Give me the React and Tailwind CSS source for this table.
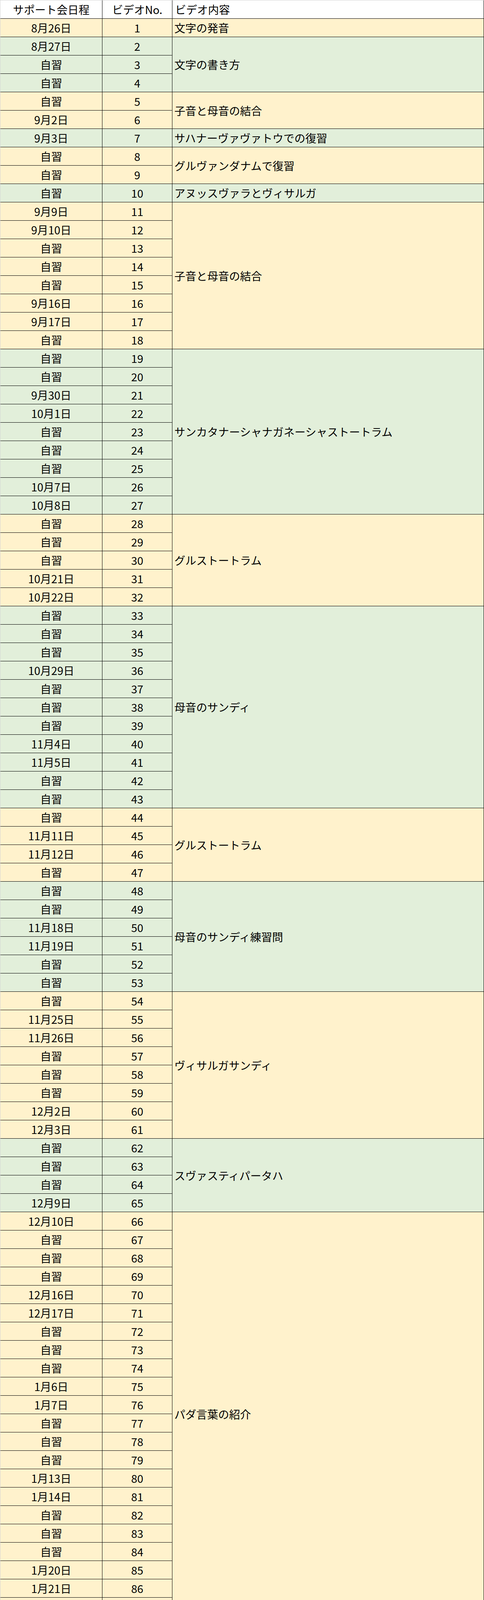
import React from 'react'

const S = '自習'

// 1〜120 のサポート会日程（100番は日付を書き換えてある）
const DATES = [
  '8月26日', '8月27日', S, S, S, '9月2日', '9月3日', S, S, S,
  '9月9日', '9月10日', S, S, S, '9月16日', '9月17日', S, S, S,
  '9月30日', '10月1日', S, S, S, '10月7日', '10月8日', S, S, S,
  '10月21日', '10月22日', S, S, S, '10月29日', S, S, S, '11月4日',
  '11月5日', S, S, S, '11月11日', '11月12日', S, S, S, '11月18日',
  '11月19日', S, S, S, '11月25日', '11月26日', S, S, S, '12月2日',
  '12月3日', S, S, S, '12月9日', '12月10日', S, S, S, '12月16日',
  '12月17日', S, S, S, '1月6日', '1月7日', S, S, S, '1月13日',
  '1月14日', S, S, S, '1月20日', '1月21日', S, S, S, '1月27日',
  '1月28日', S, S, S, '2月3日', '2月4日', S, S, S, 'FIXED',
  S, S, S, '2月17日', '1月18日', S, S, S, '2月25日', S,
  S, S, '3月3日', '3月4日', S, S, S, '3月17日', '3月18日', S,
]

// [最初の番号, 最後の番号, ビデオ内容]
const GROUPS = [
  [1, 1, '文字の発音'],
  [2, 4, '文字の書き方'],
  [5, 6, '子音と母音の結合'],
  [7, 7, 'サハナーヴァヴァトウでの復習'],
  [8, 9, 'グルヴァンダナムで復習'],
  [10, 10, 'アヌッスヴァラとヴィサルガ'],
  [11, 18, '子音と母音の結合'],
  [19, 27, 'サンカタナーシャナガネーシャストートラム'],
  [28, 32, 'グルストートラム'],
  [33, 43, '母音のサンディ'],
  [44, 47, 'グルストートラム'],
  [48, 53, '母音のサンディ練習問'],
  [54, 61, 'ヴィサルガサンディ'],
  [62, 65, 'スヴァスティパータハ'],
  [66, 87, 'パダ言葉の紹介'],
  [88, 93, '今迄の振り返りクラス'],
  [94, 108, 'ヴァーキャ文章の紹介'],
  [109, 120, '1 st conjugation'],
]

const SPARE = ['3月24日', '3月25日', '3月31日']

const YELLOW = 'bg-[#fff2cc]'
const GREEN = 'bg-[#e2efda]'

const cell = 'flex items-center border-r border-b border-black'

/** 日付を書き換えた 100 番のセル：11 に赤線、横に赤で 10日。 */
function FixedDate() {
  return (
    <>
      <span>
        2月
        <span className="relative">
          11
          <span className="absolute -left-[3px] -right-[3px] top-1/2 h-[4px] -translate-y-1/2 bg-[#e8202a]" />
        </span>
        日
      </span>
      <span className="absolute left-[191px] top-[10px] text-[30px] leading-none text-[#e8202a]">10日</span>
    </>
  )
}

export default function App() {
  const cells = []

  GROUPS.forEach(([from, to, title], g) => {
    const bg = g % 2 === 0 ? YELLOW : GREEN
    for (let n = from; n <= to; n++) {
      const date = DATES[n - 1]
      cells.push(
        <div key={`d${n}`} className={`${cell} ${bg} relative col-start-1 justify-center`}>
          {date === 'FIXED' ? <FixedDate /> : date}
        </div>,
        <div key={`n${n}`} className={`${cell} ${bg} col-start-2 justify-center`}>
          {n}
        </div>,
      )
      // 結合セル：グループの先頭行で行数ぶん縦に伸ばす
      if (n === from) {
        cells.push(
          <div
            key={`t${n}`}
            className={`${cell} ${bg} col-start-3 pl-[5px]`}
            style={{ gridRow: `span ${to - from + 1}` }}
          >
            {title}
          </div>,
        )
      }
    }
  })

  return (
    <div
      className="grid w-[1238px] grid-cols-[261px_179px_797px] auto-rows-[47px] border-l border-t border-[#d4d4d4] bg-white text-[28px] leading-none text-black"
      style={{ fontFamily: '"Noto Sans CJK JP", "Noto Sans", sans-serif' }}
    >
      <div className={`${cell} justify-center bg-white`}>サポート会日程</div>
      <div className={`${cell} justify-center bg-white`}>ビデオNo.</div>
      <div className={`${cell} bg-white pl-[7px]`}>ビデオ内容</div>

      {cells}

      {/* 空行 */}
      <div className={`${cell} bg-white`} />
      <div className={`${cell} bg-white`} />
      <div className={`${cell} bg-white`} />

      {SPARE.map((d) => (
        <React.Fragment key={d}>
          <div className={`${cell} ${GREEN} justify-center`}>{d}</div>
          <div className={`${cell} ${GREEN}`} />
          <div className={`${cell} ${GREEN} pl-[5px]`}>予備日</div>
        </React.Fragment>
      ))}
    </div>
  )
}
